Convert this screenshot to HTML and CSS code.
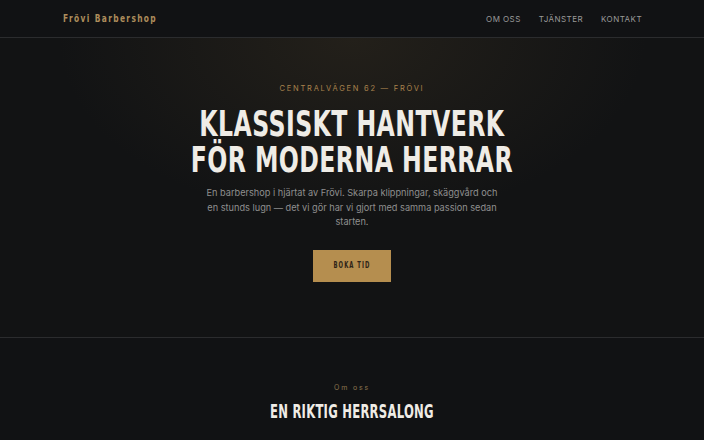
FILE: index.html
```html
<!DOCTYPE html>
<html lang="sv">
<head>
<meta charset="utf-8">
<title>Frövi Barbershop</title>
<link rel="stylesheet" href="styles.css">
</head>
<body>
<header class="site-header">
  <a class="brand" href="#">Frövi Barbershop</a>
  <nav class="nav">
    <a href="#om">OM OSS</a>
    <a href="#tjanster">TJÄNSTER</a>
    <a href="#kontakt">KONTAKT</a>
  </nav>
</header>
<section class="hero">
  <p class="eyebrow">CENTRALVÄGEN 62 — FRÖVI</p>
  <h1 class="hero-title"><span class="title-line">KLASSISKT HANTVERK</span><span class="title-line">FÖR MODERNA HERRAR</span></h1>
  <p class="hero-text">En barbershop i hjärtat av Frövi. Skarpa klippningar, skäggvård och en stunds lugn — det vi gör har vi gjort med samma passion sedan starten.</p>
  <a class="btn" href="#boka"><span class="btn-label">BOKA TID</span></a>
</section>
<section class="about" id="om">
  <p class="kicker">Om oss</p>
  <h2 class="section-title">EN RIKTIG HERRSALONG</h2>
</section>
</body>
</html>
```
FILE: styles.css
```css
* { box-sizing: border-box; }
html, body { margin: 0; padding: 0; }
body {
  background: #111214;
  color: #e8e4dc;
  font-family: "Inter", "Liberation Sans", sans-serif;
  overflow: hidden;
}
a { text-decoration: none; color: inherit; }

/* condensed display face: DejaVu Sans Bold narrowed horizontally */
.brand, .hero-title, .btn-label, .section-title {
  font-family: "DejaVu Sans", sans-serif;
  font-weight: bold;
}

.site-header {
  height: 38px;
  border-bottom: 1px solid #2b2c2e;
  display: flex;
  align-items: center;
  justify-content: space-between;
  padding: 0 62px 0 63px;
  background: #111214;
}
.brand {
  display: inline-block;
  font-size: 11px;
  letter-spacing: 2px;
  color: #ae8d5c;
  transform: scaleX(0.68);
  transform-origin: left center;
}
.nav { display: flex; gap: 18px; }
.nav a {
  font-size: 8px;
  letter-spacing: 0.45px;
  color: #9a9a9a;
}

.hero {
  height: 300px;
  border-bottom: 1px solid #2b2c2e;
  display: flex;
  flex-direction: column;
  align-items: center;
  text-align: center;
  padding-top: 46px;
  background:
    radial-gradient(ellipse 420px 260px at 50% 0%, rgba(70, 58, 38, 0.33), rgba(20, 20, 20, 0) 70%),
    #121314;
}
.eyebrow {
  margin: 0;
  height: 9px;
  font-size: 7.5px;
  line-height: 9px;
  letter-spacing: 1.75px;
  color: #a8824d;
}
.hero-title {
  margin: 13px 0 0;
  display: flex;
  flex-direction: column;
  align-items: center;
  font-size: 35px;
  line-height: 36px;
  letter-spacing: 0.6px;
  color: #efece6;
  transform: scaleX(0.675);
}
.title-line {
  display: block;
  height: 36px;
  white-space: nowrap;
}
.hero-text {
  margin: 8px 0 0;
  max-width: 296px;
  font-size: 9.2px;
  line-height: 14.5px;
  color: #8f8f8f;
}
.btn {
  margin-top: 20px;
  width: 78px;
  height: 32px;
  display: flex;
  align-items: center;
  justify-content: center;
  background: #b58e4f;
  color: #2e2417;
}
.btn-label {
  display: inline-block;
  font-size: 8px;
  letter-spacing: 1.6px;
  transform: scaleX(0.66);
}

.about {
  display: flex;
  flex-direction: column;
  align-items: center;
  padding-top: 45px;
}
.kicker {
  margin: 0;
  font-size: 7px;
  letter-spacing: 1.8px;
  color: #8d7550;
}
.section-title {
  margin: 8px 0 0;
  font-size: 19px;
  letter-spacing: 0.4px;
  color: #efece6;
  transform: scaleX(0.612);
}
```
